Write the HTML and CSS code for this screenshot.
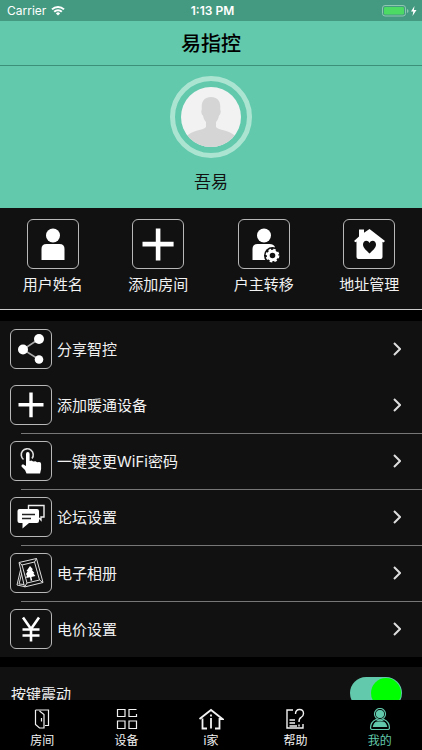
FILE: index.html
```html
<!DOCTYPE html>
<html lang="zh-CN">
<head>
<meta charset="utf-8">
<meta name="viewport" content="width=device-width, initial-scale=1">
<title>易指控</title>
<link rel="stylesheet" href="styles.css">
</head>
<body>
<div class="status">
  <div class="carrier">
    <span>Carrier</span>
    <svg width="14" height="11" viewBox="0 0 14 11" fill="none" stroke="#fff" stroke-width="2"><path d="M1 4.400a8.600 8.600 0 0 1 12 0M3.200 6.800a5.400 5.400 0 0 1 7.600 0"/><path d="M7 10.600 4.900 8.400a3 3 0 0 1 4.200 0z" fill="#fff" stroke="none"/></svg>
  </div>
  <span class="time">1:13 PM</span>
  <div class="power">
    <svg width="36" height="12" viewBox="0 0 36 12"><rect x=".5" y=".5" width="23" height="10.500" rx="2.500" fill="none" stroke="#8fc6b2"/><rect x="2" y="2" width="20" height="7.500" rx="1.200" fill="#4cd964"/><path d="M25 4v4q1.500-.5 1.500-2T25 4z" fill="#8fc6b2"/><path d="M32.500 1 29 6.500h2.300L30.500 11 34.500 5h-2.600z" fill="#fff"/></svg>
  </div>
</div>
<header class="nav"><h1>易指控</h1></header>
<main class="content">
  <section class="profile">
    <div class="avatar">
      <svg viewBox="0 0 60 60"><defs><clipPath id="face"><circle cx="30" cy="30" r="30"/></clipPath></defs><g clip-path="url(#face)"><path fill="#f2f2f2" d="M0 0h60v60H0z"/><path fill="#d5d5d5" d="M30 10c-6 0-9.500 4-9.300 10v3c-1 1 0 5 1.300 5.500.5 3 1.500 5 3 6.500v5c-1.500 3-15 3.500-19 9V62h48V49c-4-5.500-17.500-6-19-9v-5c1.500-1.500 2.500-3.500 3-6.500 1.300-.5 2.300-4.500 1.300-5.500v-3c.2-6-3.300-10-9.300-10z"/></g></svg>
    </div>
    <p class="name">吾易</p>
  </section>
  <nav class="shortcuts">
    <a href="#name"><span class="tile"><svg viewBox="0 0 50 48" fill="#fff"><circle cx="25" cy="15.500" r="7"/><path d="M13.500 40V29q0-5 5-5h13q5 0 5 5v11z"/></svg></span>用户姓名</a>
    <a href="#room"><span class="tile"><svg viewBox="0 0 50 48" fill="#fff"><path d="M22.800 8.500h4.600v13.300h13.200v4.600H27.400v14h-4.600v-14H9.500v-4.600h13.300z"/></svg></span>添加房间</a>
    <a href="#transfer"><span class="tile"><svg viewBox="0 0 50 48"><circle cx="25" cy="15.500" r="7" fill="#fff"/><path d="M13.500 40V29q0-5 5-5h12q4 0 5.500 3v13z" fill="#fff"/><circle cx="33.500" cy="35.500" r="8.500" fill="#111"/><circle cx="33.500" cy="35.500" r="4.300" fill="none" stroke="#fff" stroke-width="3"/><circle cx="33.500" cy="35.500" r="6" fill="none" stroke="#fff" stroke-width="1.800" stroke-dasharray="2.600 2.110"/></svg></span>户主转移</a>
    <a href="#address"><span class="tile"><svg viewBox="0 0 50 48"><path fill="#fff" d="M10 21 15 16.500V9.500h5v3.200L25.500 9 41 21l-1.500 1.500-1-.7V37q0 2-2 2H14.500q-2 0-2-2V21.500l-1 .7z"/><path fill="#111" d="M25.500 33.500c-3-3-6.500-5.500-6.500-9 0-4.500 5-5 6.500-1.500 1.500-3.500 6.500-3 6.500 1.500 0 3.500-3.500 6-6.500 9z"/></svg></span>地址管理</a>
  </nav>
  <ul class="menu">
    <li><a href="#share"><span class="tile"><svg viewBox="0 0 40 38"><path d="M28 9 12 19.500 28 29.500" fill="none" stroke="#aaa" stroke-width="1.500"/><g fill="#fff"><circle cx="28" cy="9" r="5"/><circle cx="12" cy="19.500" r="5"/><circle cx="28" cy="29.500" r="4.300"/></g></svg></span><span class="label">分享智控</span><svg class="chevron" viewBox="0 0 8 14"><path d="m1 1 6 6-6 6"/></svg></a></li>
    <li><a href="#hvac"><span class="tile"><svg viewBox="0 0 40 38" fill="#fff"><path d="M18.300 6.500h3.400v10.600h10.800v3.400H21.700v10.800h-3.400V20.500H7.500v-3.400h10.800z"/></svg></span><span class="label">添加暖通设备</span><svg class="chevron" viewBox="0 0 8 14"><path d="m1 1 6 6-6 6"/></svg></a></li>
    <li><a href="#wifi"><span class="tile"><svg viewBox="0 0 40 38"><path d="M12.500 17.500a6 6 0 1 1 8.500-1" fill="none" stroke="#ddd" stroke-width="1.600"/><path fill="#fff" d="M15 12q0-2 1.800-2t1.800 2v7l2-.5 1.500 1 2.500-.3 1.500 1 2-.2q2 0 2 2V27l-1 4.500H15.500L14 28l-3.500-3.500q-.5-2 1.500-2.200l3 1.700z"/></svg></span><span class="label">一键变更WiFi密码</span><svg class="chevron" viewBox="0 0 8 14"><path d="m1 1 6 6-6 6"/></svg></a></li>
    <li><a href="#forum"><span class="tile"><svg viewBox="0 0 40 38"><path d="M17.500 11V7.500H33v11.500h-3v3l-2-2" fill="none" stroke="#eee" stroke-width="1.400"/><path fill="#fff" d="M8.500 11H26q2 0 2 2v10q0 2-2 2h-8l-6.500 5.500V25h-3q-2 0-2-2V13q0-2 2-2z"/><path stroke="#222" stroke-width="1.300" d="M11 16.500h13M11 20.500h9"/></svg></span><span class="label">论坛设置</span><svg class="chevron" viewBox="0 0 8 14"><path d="m1 1 6 6-6 6"/></svg></a></li>
    <li><a href="#album"><span class="tile"><svg viewBox="0 0 40 38"><g fill="none" stroke="#ddd" stroke-width="1"><path d="m8 8.500 17.500-4L32 28.500 13.500 33z"/><path d="m11 11 12.500-3L28.500 26l-12.500 3zM8 8.500l3 2.500M25.500 4.500l-2 3.500M32 28.500 28.500 26M13.500 33l2.500-4M9.500 16 6 31l7 1.500M10.500 20 8 30l5 .5"/></g><path fill="#fff" d="m19 12-3.500 5 1.200.2-2 3.300 1.300.2-.8 3.300 3.800-.8.700 3.500 1.500-.3-.8-3.500 4-1-2-2.400 1-.5-2.500-3 1-.7z"/></svg></span><span class="label">电子相册</span><svg class="chevron" viewBox="0 0 8 14"><path d="m1 1 6 6-6 6"/></svg></a></li>
    <li><a href="#price"><span class="tile"><svg viewBox="0 0 40 38"><path d="M12 7.500 20 19l8-11.500M20 18v13.500M11.500 19.500h17M11.500 25.500h17" fill="none" stroke="#fff" stroke-width="2.600"/></svg></span><span class="label">电价设置</span><svg class="chevron" viewBox="0 0 8 14"><path d="m1 1 6 6-6 6"/></svg></a></li>
  </ul>
  <div class="setting">
    <label for="vibrate">按键震动</label>
    <input class="switch" id="vibrate" type="checkbox" role="switch" checked>
  </div>
</main>
<nav class="tabs">
  <a href="#rooms"><svg viewBox="0 0 22 22"><path d="M4.500 2h13v15.500H14M4.500 2v14.500l4 3.500H13V6.500L8.500 3M10.500 10v3.500"/></svg>房间</a>
  <a href="#devices"><svg viewBox="0 0 22 22"><path d="M1.500 1.500H9v7H1.500zM20.500 1.500H13v7h7.500V6M1.500 13H9v7.500H1.500zM13 13h7.500v7.500H13z"/></svg>设备</a>
  <a href="#home"><svg class="home" viewBox="0 0 26 22"><path d="M1.500 11 13 2l11.500 9h-3v9.500H17M4.500 10.500v10H9M13 10v10.500M13 6.500v2"/></svg>i家</a>
  <a href="#help"><svg class="bold" viewBox="0 0 22 22"><path d="M9 2H3v18h16v-4M5.500 12H11M5.500 15H11M5.500 18H13M11.500 6q0-4.500 4-4.500t4 4q0 2.500-2.500 4-2 1-2 4.500M15 16.500v2"/></svg>帮助</a>
  <a class="active" href="#me" aria-current="page"><svg viewBox="0 0 22 22"><circle cx="11" cy="6" r="5.500"/><circle cx="11" cy="6" r="3.500" fill="currentColor"/><path d="M7 11.500Q1.500 14 1.500 20q0 1.500 2 1.500h15q2 0 2-1.500 0-6-5.500-8.500-4 2.500-8 0z"/><path d="M4.500 18.500q1-4.500 4-4.500h5q3 0 4 4.500z" fill="currentColor"/></svg>我的</a>
</nav>
</body>
</html>
```

FILE: styles.css
```css
* { box-sizing: border-box; }

body {
  margin: 0;
  height: 100vh;
  display: flex;
  flex-direction: column;
  background: #000;
  color: #f2f2f2;
  font-family: Inter, "Noto Sans CJK SC", sans-serif;
  font-size: 15px;
}

a { color: inherit; text-decoration: none; }
svg { display: block; }

.status {
  flex: none;
  height: 21px;
  padding: 0 4px 0 7px;
  display: grid;
  grid-template-columns: 1fr auto 1fr;
  align-items: center;
  background: #449a80;
  color: #fff;
  font-size: 12px;
}
.carrier { display: flex; align-items: center; gap: 5px; }
.time { font-weight: 600; }
.power { justify-self: end; }

.nav {
  flex: none;
  height: 45px;
  padding-bottom: 2px;
  display: flex;
  align-items: center;
  justify-content: center;
  background: #62c9ac;
  border-bottom: 1px solid #3c8f78;
  color: #000;
}
h1 { margin: 0; font-size: 20px; font-weight: 500; }

.content { flex: 1; min-height: 0; overflow: hidden; }

.profile {
  height: 142px;
  padding-top: 10px;
  background: #62c9ac;
  color: #111;
}
.avatar {
  width: 82px;
  height: 82px;
  margin: 0 auto;
  padding: 6px;
  border: 5px solid #ace4d2;
  border-radius: 50%;
}
.name { margin: 12px 0 0; font-size: 17px; line-height: 24px; text-align: center; }

.tile {
  flex: none;
  display: block;
  border: 1px solid #b8b8b8;
  border-radius: 6px;
}
.tile svg { width: 100%; height: 100%; }

.shortcuts {
  display: grid;
  grid-template-columns: repeat(4, 1fr);
  height: 102px;
  padding-top: 11px;
  background: #111;
  border-bottom: 1px solid #ccc;
}
.shortcuts a {
  display: flex;
  flex-direction: column;
  align-items: center;
  gap: 5px;
  line-height: 22px;
}
.shortcuts .tile { width: 52px; height: 50px; }

.menu { margin: 11px 0 0; padding: 0; list-style: none; background: #111; }
.menu a {
  position: relative;
  height: 56px;
  padding: 0 21px 0 10px;
  display: flex;
  align-items: center;
  gap: 5px;
}
.menu li + li + li a::before {
  content: "";
  position: absolute;
  top: 0;
  left: 21px;
  right: 0;
  border-top: 1px solid #777;
}
.menu .tile { width: 42px; height: 40px; }
.label { flex: 1; padding-bottom: 2px; }
.chevron { width: 8px; height: 14px; fill: none; stroke: #ddd; stroke-width: 2; }

.setting {
  height: 56px;
  margin-top: 10px;
  padding: 0 20px 4px 11px;
  display: flex;
  align-items: center;
  justify-content: space-between;
  background: #111;
}
.switch {
  appearance: none;
  width: 52px;
  height: 32px;
  margin: 0;
  padding: 1px;
  border-radius: 16px;
  background: #555;
}
.switch::before {
  content: "";
  display: block;
  width: 30px;
  height: 30px;
  border-radius: 50%;
  background: #ddd;
}
.switch:checked { background: #62c9ac; }
.switch:checked::before { margin-left: auto; background: #0f0; }

.tabs {
  flex: none;
  height: 50px;
  padding-top: 8px;
  display: grid;
  grid-template-columns: repeat(5, 1fr);
  background: #000;
  font-size: 12px;
}
.tabs a {
  display: flex;
  flex-direction: column;
  align-items: center;
  gap: 3px;
  line-height: 16px;
}
.tabs svg { width: 22px; height: 22px; fill: none; stroke: currentColor; stroke-width: 1.2; }
.tabs .bold { stroke-width: 1.4; }
.tabs .home { width: 26px; stroke-width: 1.8; }
.tabs .active { color: #62c9ac; }
```
